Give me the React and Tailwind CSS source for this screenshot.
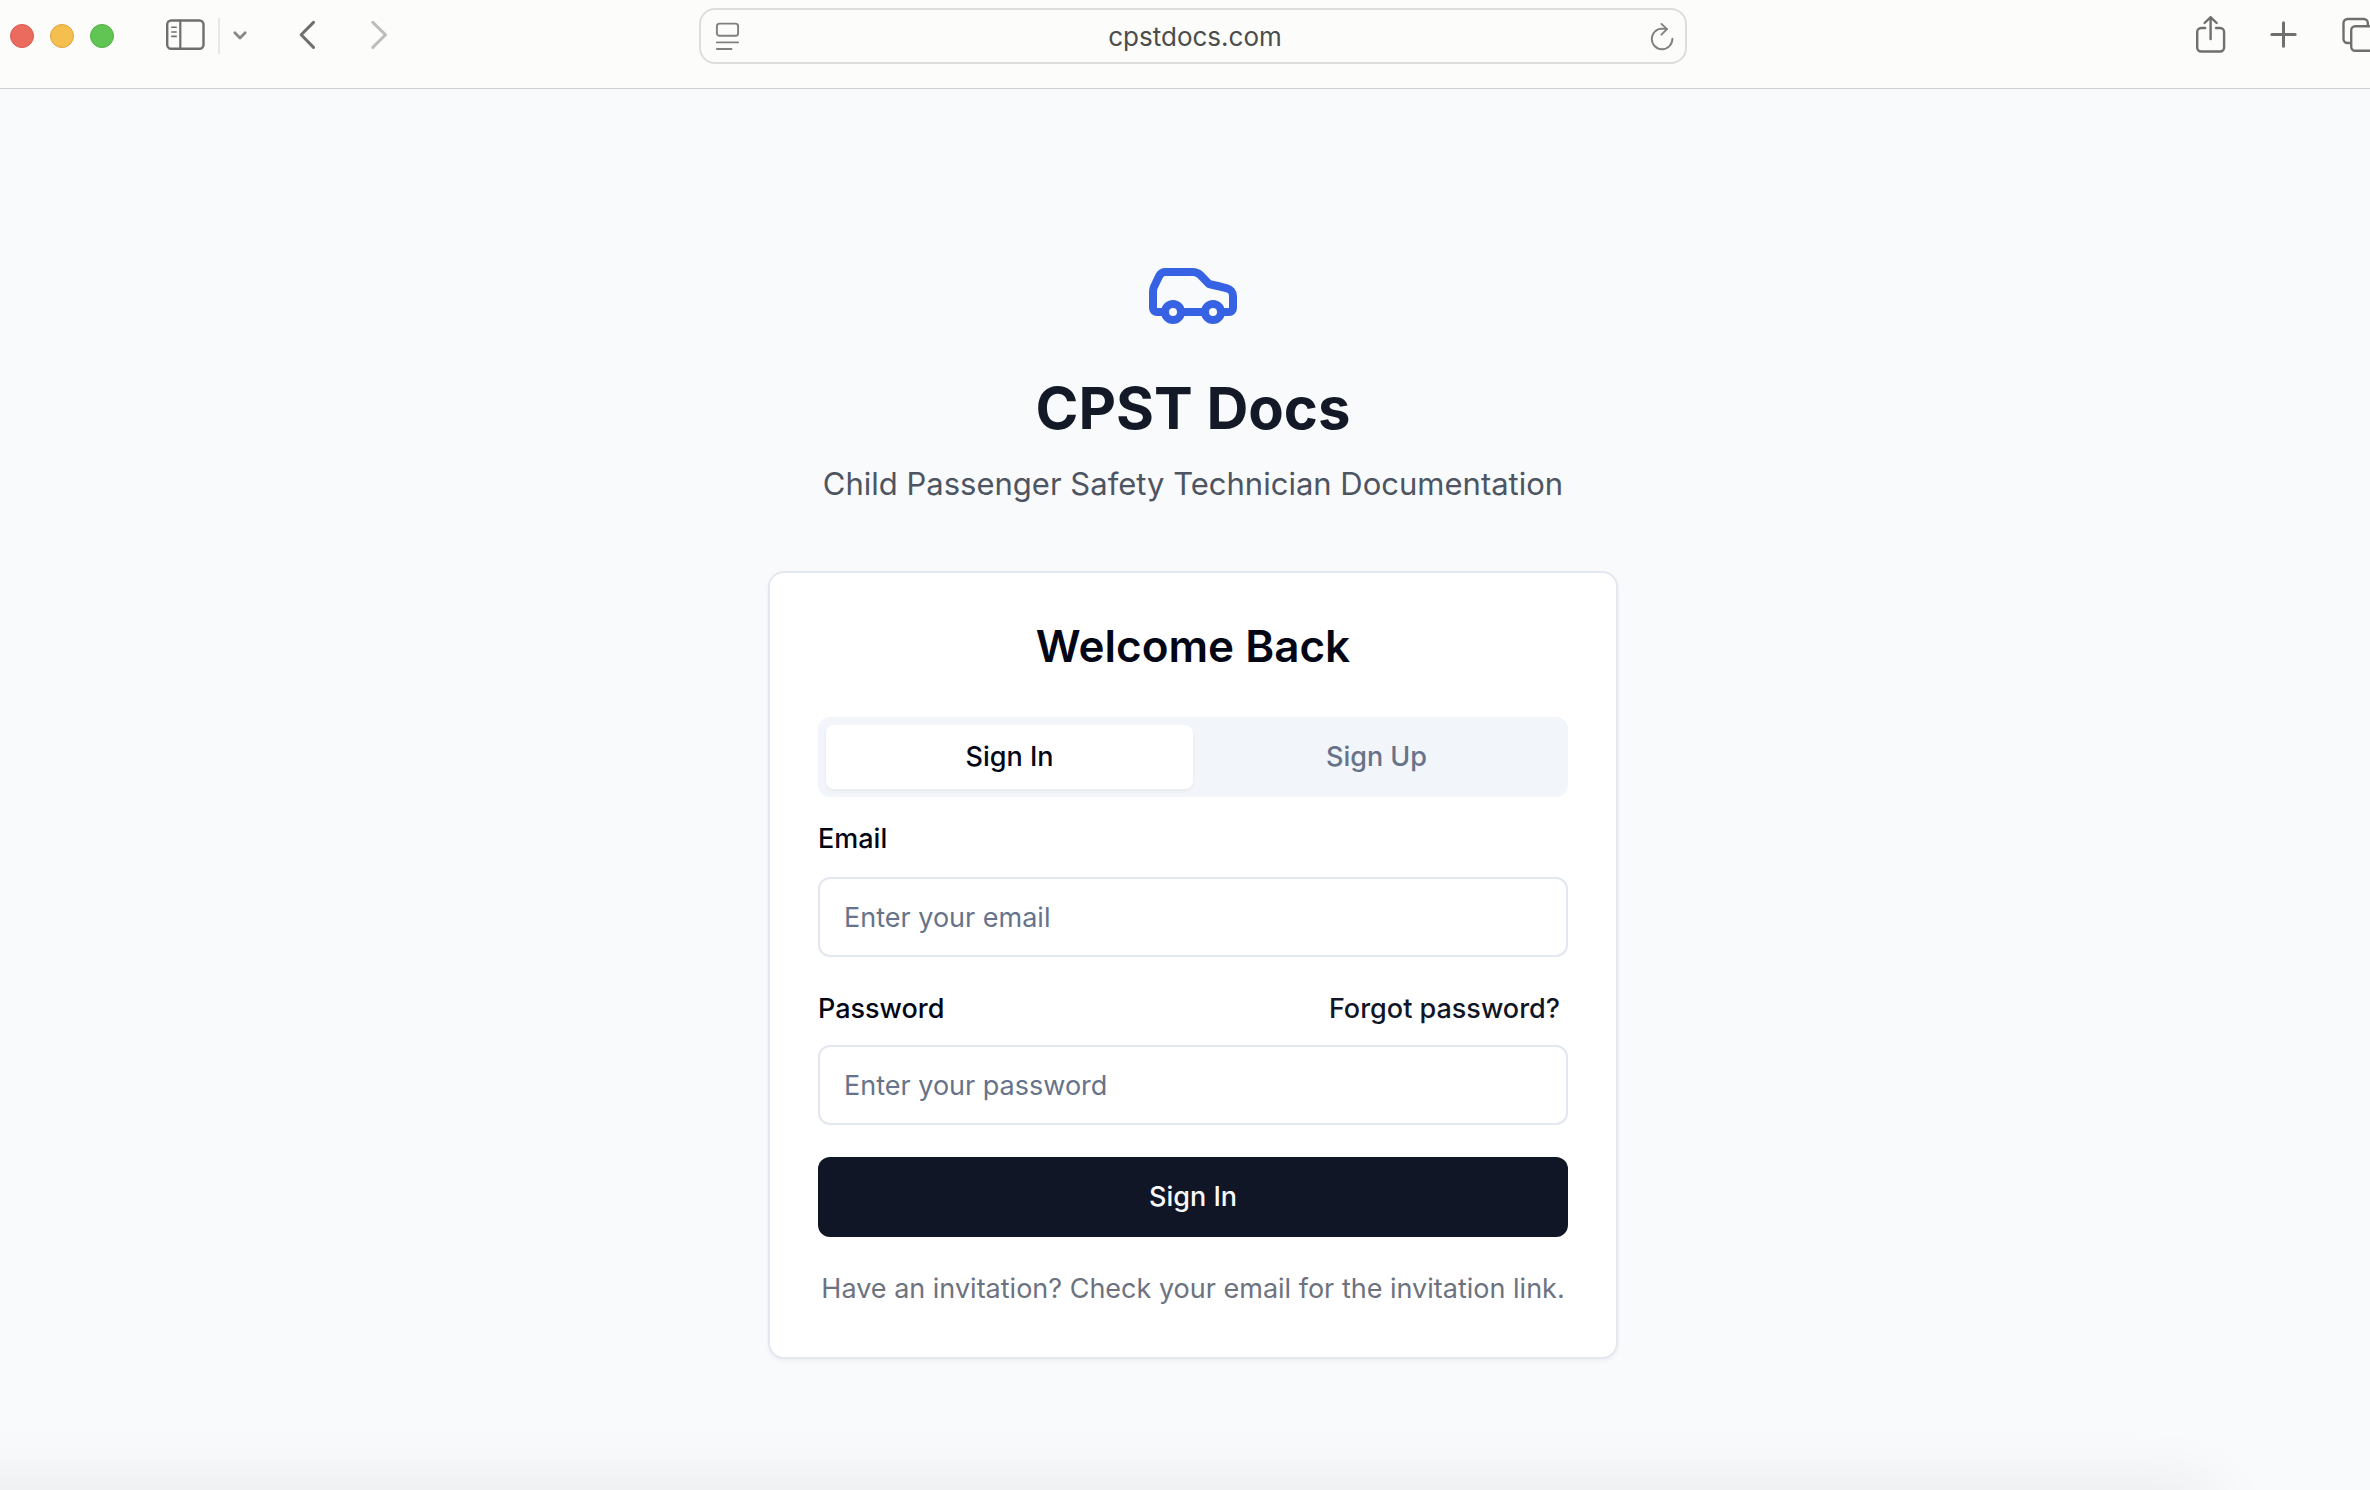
import { useState } from "react";
import { Car } from "lucide-react";
import { clsx } from "clsx";

const TABS = [
  { id: "signin", label: "Sign In" },
  { id: "signup", label: "Sign Up" },
];

const inputClass =
  "block w-full h-20 rounded-xl border-2 border-[#e3e7ef] bg-white px-6 text-[27px] text-[#030615] placeholder:text-[#67738a] placeholder:opacity-100 outline-none focus:border-[#9aa5b8]";

function BrowserBar() {
  return (
    <header className="h-[89px] border-b border-[#d0d0d1] bg-[#fcfcfa] text-[#6f6f6d]">
      <div className="grid h-[72px] grid-cols-[1fr_minmax(0,988px)_1fr] items-center">
        <div className="flex items-center pl-2.5">
          <div className="flex gap-4">
            <span className="size-6 rounded-full border border-[#dc5a4f] bg-[#ec6b5f]" />
            <span className="size-6 rounded-full border border-[#dba53f] bg-[#f5bf4f]" />
            <span className="size-6 rounded-full border border-[#52b043] bg-[#61c554]" />
          </div>

          <button type="button" aria-label="Show sidebar" className="ml-[52px]">
            <svg className="block" width="40" height="40" fill="none" stroke="currentColor" strokeLinecap="round">
              <rect x="1.2" y="4.5" width="36.3" height="28.3" rx="4" strokeWidth="2.4" />
              <path d="M14.3 4.5v28.3" strokeWidth="2.2" />
              <path d="M5.8 11.3h4.4M5.8 16h4.4M5.8 20.4h4.4" strokeWidth="1.6" />
            </svg>
          </button>
          <span className="ml-3 h-9 w-0.5 bg-[#e8e8e7]" />
          <button type="button" aria-label="Tab groups" className="ml-3 text-[#88888b]">
            <svg className="block" width="16" height="16" fill="none" stroke="currentColor" strokeWidth="2.8" strokeLinecap="round" strokeLinejoin="round">
              <path d="M2.8 4.8 8 10l5.2-5.2" />
            </svg>
          </button>

          <div className="ml-12 flex gap-[50px]">
            <button type="button" aria-label="Back">
              <svg className="block" width="22" height="32" fill="none" stroke="currentColor" strokeWidth="3" strokeLinecap="round" strokeLinejoin="round">
                <path d="M17.5 2.4 5.2 14.8l12.3 12.6" />
              </svg>
            </button>
            <button type="button" aria-label="Forward" className="text-[#bdbdbb]">
              <svg className="block" width="22" height="32" fill="none" stroke="currentColor" strokeWidth="3" strokeLinecap="round" strokeLinejoin="round">
                <path d="m4.8 2.4 12.7 12.4L4.8 27.4" />
              </svg>
            </button>
          </div>
        </div>

        <div className="flex h-14 items-center rounded-2xl border-2 border-[#dddddb] pl-3.5 pr-3">
          <button type="button" aria-label="Page menu" className="text-[#808080]">
            <svg className="block" width="26" height="32" fill="none" stroke="currentColor" strokeWidth="1.9" strokeLinecap="round">
              <rect x="1.9" y="3.6" width="21.2" height="12.2" rx="2.6" />
              <path d="M1.9 22.4h21.2M1.9 29h14.6" />
            </svg>
          </button>
          <input
            type="text"
            aria-label="Address"
            defaultValue="cpstdocs.com"
            className="min-w-0 flex-1 bg-transparent text-center text-[26px] text-[#4c4c4c] outline-none"
          />
          <button type="button" aria-label="Reload" className="text-[#808080]">
            <svg className="block overflow-visible" width="24" height="32" fill="none" stroke="currentColor" strokeWidth="1.9" strokeLinecap="round" strokeLinejoin="round">
              <path d="M23.4 18.8A10.3 10.3 0 1 1 13.1 8.6l4.9.5" />
              <path d="m12.4 3.9 5.6 5.2-5.6 5.6" />
            </svg>
          </button>
        </div>

        <div className="flex items-center justify-end gap-[42px] pr-2.5">
          <button type="button" aria-label="Share">
            <svg className="block" width="32" height="40" fill="none" stroke="currentColor" strokeWidth="2.4" strokeLinecap="round" strokeLinejoin="round">
              <path d="M9.2 12H5.2a4 4 0 0 0-4 4v15.5a4 4 0 0 0 4 4h18.9a4 4 0 0 0 4-4V16a4 4 0 0 0-4-4h-4" />
              <path d="M14.6 23V1.4M8.6 7l6-5.8 6 5.8" />
            </svg>
          </button>
          <button type="button" aria-label="New tab">
            <svg className="block" width="28" height="40" fill="none" stroke="currentColor" strokeWidth="3" strokeLinecap="round">
              <path d="M1.8 18.5h23.4M13.5 6.8v23.4" />
            </svg>
          </button>
          <button type="button" aria-label="Show tabs">
            <svg className="block" width="36" height="40" fill="none" stroke="currentColor" strokeWidth="2.4">
              <path d="M11 27H7.5a4 4 0 0 1-4-4V7a4 4 0 0 1 4-4h16.3a4 4 0 0 1 4 4v3" />
              <rect x="11.2" y="10.2" width="23.6" height="24.6" rx="4" />
            </svg>
          </button>
        </div>
      </div>
    </header>
  );
}

export default function App() {
  const [tab, setTab] = useState("signin");

  return (
    <div className="min-h-screen overflow-hidden bg-[#f9fafc] font-['Inter',sans-serif]">
      {/* the window runs a little past the right edge */}
      <div className="relative -mr-4 flex min-h-screen flex-col">
        <BrowserBar />

        <main className="flex flex-1 flex-col items-center px-8 pt-[155px]">
          <Car className="size-24 text-[#3662e3]" strokeWidth={2} />
          <h1 className="mt-8 text-[58px] leading-[72px] font-bold text-[#131926]">CPST Docs</h1>
          <p className="mt-4 text-[31px] leading-[48px] text-[#4e5562]">
            Child Passenger Safety Technician Documentation
          </p>

          <section className="mt-[63px] w-full max-w-[850px] rounded-2xl border-2 border-[#e3e7ef] bg-white p-12 shadow-[0_2px_4px_rgba(0,0,0,0.05)]">
            <h2 className="text-center text-[44px] leading-[50px] font-semibold text-[#030615]">Welcome Back</h2>

            <div role="tablist" className="mt-[46px] grid h-20 grid-cols-2 rounded-xl bg-[#f2f5fa] p-2">
              {TABS.map((t) => (
                <button
                  key={t.id}
                  type="button"
                  role="tab"
                  aria-selected={tab === t.id}
                  onClick={() => setTab(t.id)}
                  className={clsx(
                    "rounded-lg text-[27px] font-medium",
                    tab === t.id
                      ? "bg-white text-[#030615] shadow-[0_2px_4px_rgba(0,0,0,0.05)]"
                      : "text-[#67738a]"
                  )}
                >
                  {t.label}
                </button>
              ))}
            </div>

            <form className="mt-4" onSubmit={(e) => e.preventDefault()}>
              <label htmlFor="email" className="mb-3 block text-[27px] leading-[52px] font-medium text-[#030615]">
                Email
              </label>
              <input id="email" type="email" placeholder="Enter your email" className={inputClass} />

              <div className="mt-8 mb-4 flex h-10 items-center justify-between text-[27px] font-medium">
                <label htmlFor="password" className="text-[#030615]">Password</label>
                <a href="#forgot" className="pr-2 text-[#111627]">Forgot password?</a>
              </div>
              <input id="password" type="password" placeholder="Enter your password" className={inputClass} />

              <button
                type="submit"
                className="mt-8 block h-20 w-full rounded-xl bg-[#111627] text-[27px] font-medium text-[#f8fafc]"
              >
                Sign In
              </button>
            </form>

            <p className="mt-8 text-center text-[27px] leading-10 text-[#6d727f]">
              Have an invitation? Check your email for the invitation link.
            </p>
          </section>
        </main>

        {/* soft shadow rising from the bottom edge */}
        <div className="pointer-events-none absolute top-full right-44 -left-20 h-20 shadow-[0_0_70px_rgba(0,0,0,0.08)]" />
      </div>
    </div>
  );
}
